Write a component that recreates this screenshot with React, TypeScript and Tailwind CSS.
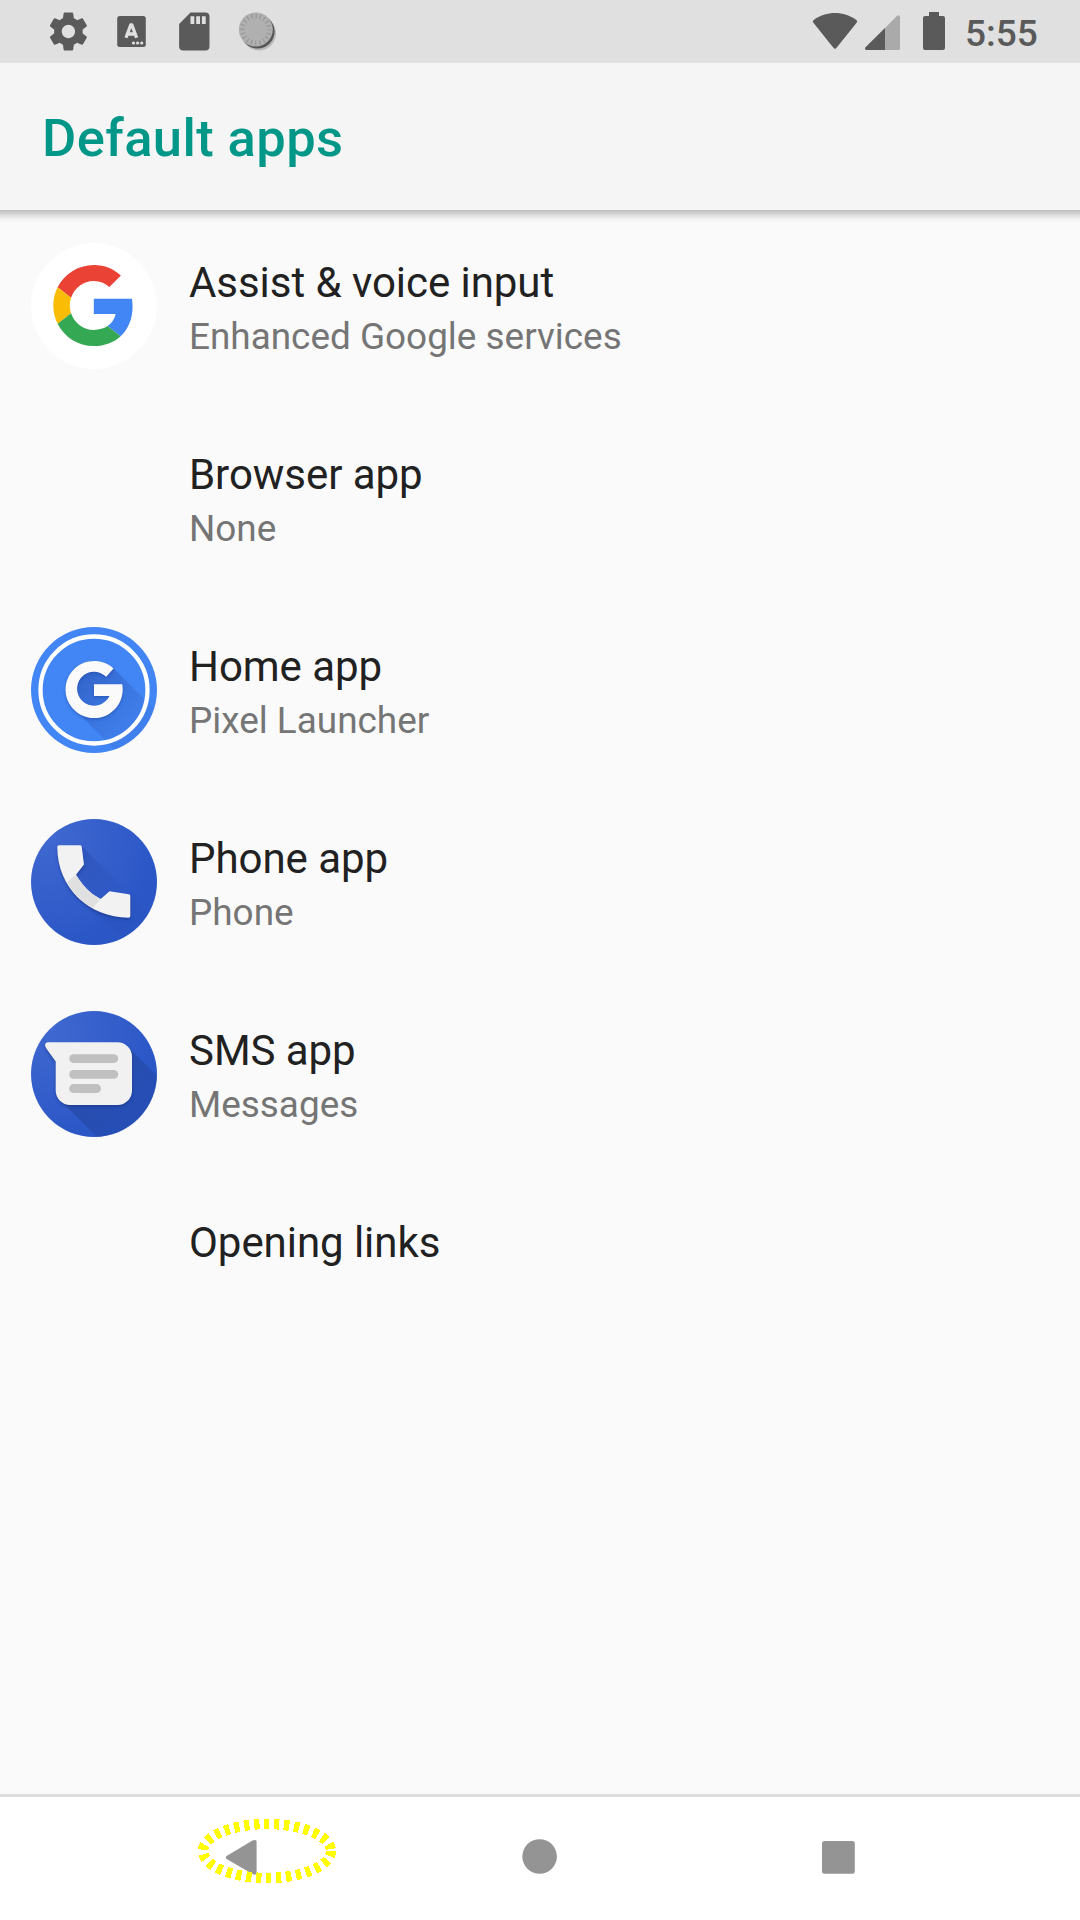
import type { ReactNode } from 'react';

function StatusIcons() {
  return (
    <svg className="h-[63px] w-[300px]" viewBox="0 0 300 63" fill="#5a5a5a">
      <path
        transform="translate(45.6 8.7) scale(1.9)"
        d="M19.43 12.98c.04-.32.07-.64.07-.98s-.03-.66-.07-.98l2.11-1.65c.19-.15.24-.42.12-.64l-2-3.46c-.12-.22-.39-.3-.61-.22l-2.49 1c-.52-.4-1.08-.73-1.69-.98l-.38-2.65C14.46 2.18 14.25 2 14 2h-4c-.25 0-.46.18-.49.42l-.38 2.65c-.61.25-1.17.59-1.69.98l-2.49-1c-.23-.09-.49 0-.61.22l-2 3.46c-.13.22-.07.49.12.64l2.11 1.65c-.04.32-.07.65-.07.98s.03.66.07.98l-2.11 1.65c-.19.15-.24.42-.12.64l2 3.46c.12.22.39.3.61.22l2.49-1c.52.4 1.08.73 1.69.98l.38 2.65c.03.24.24.42.49.42h4c.25 0 .46-.18.49-.42l.38-2.65c.61-.25 1.17-.59 1.69-.98l2.49 1c.23.09.49 0 .61-.22l2-3.46c.12-.22.07-.49-.12-.64l-2.11-1.65zM12 15.5c-1.93 0-3.5-1.57-3.5-3.5s1.57-3.5 3.5-3.5 3.5 1.57 3.5 3.5-1.57 3.5-3.5 3.5z"
      />
      <rect x="117.2" y="16" width="28.6" height="31" rx="2.5" />
      <path d="M126 37.8L130.7 25H131.9L136.6 37.8M128 34H134.6" fill="none" stroke="#e0e0e0" strokeWidth="3.3" strokeLinejoin="round" />
      <circle cx="133.5" cy="43" r="1.6" fill="#e0e0e0" />
      <circle cx="137.6" cy="43" r="1.6" fill="#e0e0e0" />
      <circle cx="141.7" cy="43" r="1.6" fill="#e0e0e0" />
      <path
        transform="translate(171.5 8.7) scale(1.9)"
        d="M18 2h-8L4.02 8 4 20c0 1.1.9 2 2 2h12c1.1 0 2-.9 2-2V4c0-1.1-.9-2-2-2zm-6 6h-2V4h2v4zm3 0h-2V4h2v4zm3 0h-2V4h2v4z"
      />
      <circle cx="259" cy="33.6" r="17" fill="#b9b9b9" />
      <circle cx="257.6" cy="31.6" r="17" fill="#555" />
      <circle cx="255.8" cy="29.5" r="17" fill="#b0b0b0" />
      <circle cx="255.8" cy="29.5" r="13.5" fill="none" stroke="#979797" strokeWidth="4.8" strokeDasharray="1.2 3.04" strokeDashoffset="0.6" />
    </svg>
  );
}

function SystemIcons() {
  return (
    <svg className="h-[63px] w-[150px]" viewBox="800 0 150 63" fill="#5a5a5a">
      <path d="M813.2 22.6Q812 21 813.7 19.9C826 10.7 844 10.7 856.3 19.9Q858 21 856.8 22.6L836.6 47.8Q835 49.8 833.4 47.8Z" />
      <path d="M900 17.2V48.5Q900 50 898.5 50H866.5Q863.8 49.5 865.7 47.3L897.2 15.8Q899.5 14 900 17.2Z" fill="#aaa" />
      <path d="M885 28V50H866.5Q863.8 49.5 865.7 47.3Z" />
      <path d="M929 12H939V16H943Q945 16 945 18V48Q945 50 943 50H925Q923 50 923 48V18Q923 16 925 16H929Z" />
    </svg>
  );
}

function GoogleIcon() {
  return (
    <svg className="size-[126px]" viewBox="0 0 126 126">
      <circle cx="63" cy="63" r="63" fill="#fff" />
      <g transform="translate(22.3 22) scale(1.6875)">
        <path fill="#EA4335" d="M24 9.5c3.54 0 6.71 1.22 9.21 3.6l6.85-6.85C35.9 2.38 30.47 0 24 0 14.62 0 6.51 5.38 2.56 13.22l7.98 6.19C12.43 13.72 17.74 9.5 24 9.5z" />
        <path fill="#4285F4" d="M46.98 24.55c0-1.57-.15-3.09-.38-4.55H24v9.02h12.94c-.58 2.96-2.26 5.48-4.78 7.18l7.73 6c4.51-4.18 7.09-10.36 7.09-17.65z" />
        <path fill="#FBBC05" d="M10.53 28.59c-.48-1.45-.76-2.99-.76-4.59s.27-3.14.76-4.59l-7.98-6.19C.92 16.46 0 20.12 0 24c0 3.88.92 7.54 2.56 10.78l7.97-6.19z" />
        <path fill="#34A853" d="M24 48c6.48 0 11.93-2.13 15.89-5.81l-7.73-6c-2.15 1.45-4.92 2.3-8.16 2.3-6.26 0-11.57-4.22-13.47-9.91l-7.98 6.19C6.51 42.62 14.62 48 24 48z" />
      </g>
    </svg>
  );
}

function LauncherIcon() {
  const letterRing = 'M82.5 41.5A28.6 28.6 0 1 0 91.2 57.2H63V68.9H78.5A17 17 0 1 1 75.2 49.8Z';
  return (
    <svg className="size-[126px]" viewBox="0 0 126 126">
      <defs>
        <clipPath id="launcher-clip"><circle cx="63" cy="63" r="63" /></clipPath>
        <linearGradient id="launcher-shade" gradientUnits="userSpaceOnUse" x1="50" y1="50" x2="104" y2="104">
          <stop offset="0" stopColor="#2a50b0" stopOpacity=".6" />
          <stop offset=".6" stopColor="#2a50b0" stopOpacity=".25" />
          <stop offset="1" stopColor="#2a50b0" stopOpacity=".1" />
        </linearGradient>
        <filter id="launcher-soft" x="-20%" y="-20%" width="140%" height="140%"><feGaussianBlur stdDeviation="1.6" /></filter>
      </defs>
      <circle cx="63" cy="63" r="63" fill="#4285F4" />
      <path clipPath="url(#launcher-clip)" d="M82.3 41.3L145 104L106 145L43 82A28 28 0 0 1 63 34Z" fill="url(#launcher-shade)" />
      <circle cx="63" cy="63" r="53.5" fill="none" stroke="#fff" strokeWidth="4.3" />
      <path transform="translate(0 1.5)" d={letterRing} fill="#1d439c" opacity=".5" filter="url(#launcher-soft)" />
      <path d={letterRing} fill="#fafafa" />
    </svg>
  );
}

function BlueDisc({ id, children }: { id: string; children: ReactNode }) {
  return (
    <svg className="size-[126px]" viewBox="0 0 126 126">
      <defs>
        <clipPath id={`${id}-clip`}><circle cx="63" cy="63" r="63" /></clipPath>
        <radialGradient id={`${id}-bg`} gradientUnits="userSpaceOnUse" cx="20" cy="20" r="110">
          <stop offset="0" stopColor="#4068d0" />
          <stop offset="1" stopColor="#2a56c6" />
        </radialGradient>
        <linearGradient id={`${id}-shade`} gradientUnits="userSpaceOnUse" x1="50" y1="50" x2="104" y2="104">
          <stop offset="0" stopColor="#1f3f93" stopOpacity=".6" />
          <stop offset="1" stopColor="#1f3f93" stopOpacity={id === 'phone' ? '.1' : '.32'} />
        </linearGradient>
        <filter id={`${id}-soft`} x="-20%" y="-20%" width="140%" height="140%"><feGaussianBlur stdDeviation="1.8" /></filter>
      </defs>
      <circle cx="63" cy="63" r="63" fill={`url(#${id}-bg)`} />
      {children}
    </svg>
  );
}

function PhoneIcon() {
  const handset =
    'M28 26.2H49Q50.4 26.2 50.7 27.6L53 45.6L45 55.7C51 66 59 74.5 69.7 80L78.5 72.2L97.8 75.2Q99.3 75.5 99.3 77V97Q99.3 98.7 97.6 98.7C58 98.5 26.3 69 26.3 28Q26.3 26.2 28 26.2Z';
  return (
    <BlueDisc id="phone">
      <defs>
        <linearGradient id="phone-inner" gradientUnits="userSpaceOnUse" x1="50" y1="42" x2="86" y2="70">
          <stop offset="0" stopColor="#2447a8" stopOpacity=".4" />
          <stop offset="1" stopColor="#2447a8" stopOpacity=".08" />
        </linearGradient>
      </defs>
      <g clipPath="url(#phone-clip)">
        <path d="M50.5 27L97 73.5L79 72L69.7 80L45 55.7L53 45.6Z" fill="url(#phone-inner)" />
        <path d="M99.3 76L140 116.7L110 140L44 75L70 84Z" fill="url(#phone-shade)" opacity=".5" />
      </g>
      <path transform="translate(0 1.8)" d={handset} fill="#163584" opacity=".6" filter="url(#phone-soft)" />
      <path d={handset} fill="#f2f2f2" />
      <path d="M45 55.7C51 66 59 74.5 69.7 80L61.5 89.2Q45 80 36 63.3Z" fill="#e0e0e0" />
    </BlueDisc>
  );
}

function MessagesIcon() {
  const bubble =
    'M16.5 31.2H86.5A14.5 14.5 0 0 1 101 45.7V79.5A14.5 14.5 0 0 1 86.5 94H39.2A14.5 14.5 0 0 1 24.7 79.5V50.5L15 37Q12.5 32.5 16.5 31.2Z';
  return (
    <BlueDisc id="messages">
      <path clipPath="url(#messages-clip)" d="M97 36L150 89L100 160L29 89Z" fill="url(#messages-shade)" />
      <path transform="translate(0 1.8)" d={bubble} fill="#163584" opacity=".6" filter="url(#messages-soft)" />
      <path d={bubble} fill="#f1f1f1" />
      <rect x="38.2" y="43.2" width="49" height="8.9" rx="4.4" fill="#c0c0c0" />
      <rect x="38.2" y="58.9" width="49" height="8.9" rx="4.4" fill="#c0c0c0" />
      <rect x="38.2" y="73.1" width="31.8" height="8.9" rx="4.4" fill="#c0c0c0" />
    </BlueDisc>
  );
}

const items: { title: string; summary?: string; icon?: ReactNode }[] = [
  { title: 'Assist & voice input', summary: 'Enhanced Google services', icon: <GoogleIcon /> },
  { title: 'Browser app', summary: 'None' },
  { title: 'Home app', summary: 'Pixel Launcher', icon: <LauncherIcon /> },
  { title: 'Phone app', summary: 'Phone', icon: <PhoneIcon /> },
  { title: 'SMS app', summary: 'Messages', icon: <MessagesIcon /> },
  { title: 'Opening links' },
];

export default function App() {
  return (
    <div className="flex h-[1920px] w-[1080px] flex-col overflow-hidden bg-[#fafafa] font-['Roboto',sans-serif]">
      <header className="flex h-[63px] shrink-0 justify-between bg-[#e0e0e0]">
        <StatusIcons />
        <div className="flex w-[280px]">
          <SystemIcons />
          <span className="pt-[10px] pl-[15px] text-[37px] leading-[48px] font-medium text-[#5a5a5a]">5:55</span>
        </div>
      </header>
      <div className="h-[147px] shrink-0 bg-[#f5f5f5] pt-[44px] pl-[42px]">
        <h1 className="text-[52.5px] leading-[62px] font-medium tracking-[0.4px] whitespace-nowrap text-[#009688]">Default apps</h1>
      </div>
      <main className="flex-1 bg-[linear-gradient(to_bottom,#bdbdbd_0px,#dcdcdc_5px,#f2f2f2_9px,#fafafa_13px)] bg-[length:100%_13px] bg-no-repeat">
        {items.map(({ title, summary, icon }) => (
          <div key={title} className="flex h-[192px] pl-[31px]">
            <div className="w-[158px] shrink-0 pt-[33px]">{icon}</div>
            <div className="pt-[48px] whitespace-nowrap">
              <div className="text-[42px] leading-[50px] tracking-[-0.05px] text-[#212121]">{title}</div>
              <div className="pt-[5px] text-[36.9px] leading-[48px] text-[#757575]">{summary}</div>
            </div>
          </div>
        ))}
      </main>
      <nav className="h-[126px] shrink-0 border-t-[3px] border-[#dcdcdc] bg-white">
        <svg className="h-[123px] w-[1080px]" viewBox="0 1797 1080 123" fill="#949494">
          <path d="M226.6 1859Q225 1857.5 226.6 1856L252.5 1840.5Q256.6 1838.8 256.6 1842V1872.5Q256.6 1875.8 252.5 1874Z" />
          <circle cx="539.6" cy="1856.5" r="17.3" />
          <rect x="822" y="1841" width="32.8" height="32.8" rx="2.5" />
          <path
            d="M331 1851A64 27 0 0 1 203 1851A64 27 0 0 1 331 1851"
            fill="none"
            stroke="#ff0"
            strokeWidth="10.4"
            strokeDasharray="5.3 4.7"
            shapeRendering="crispEdges"
          />
        </svg>
      </nav>
    </div>
  );
}
